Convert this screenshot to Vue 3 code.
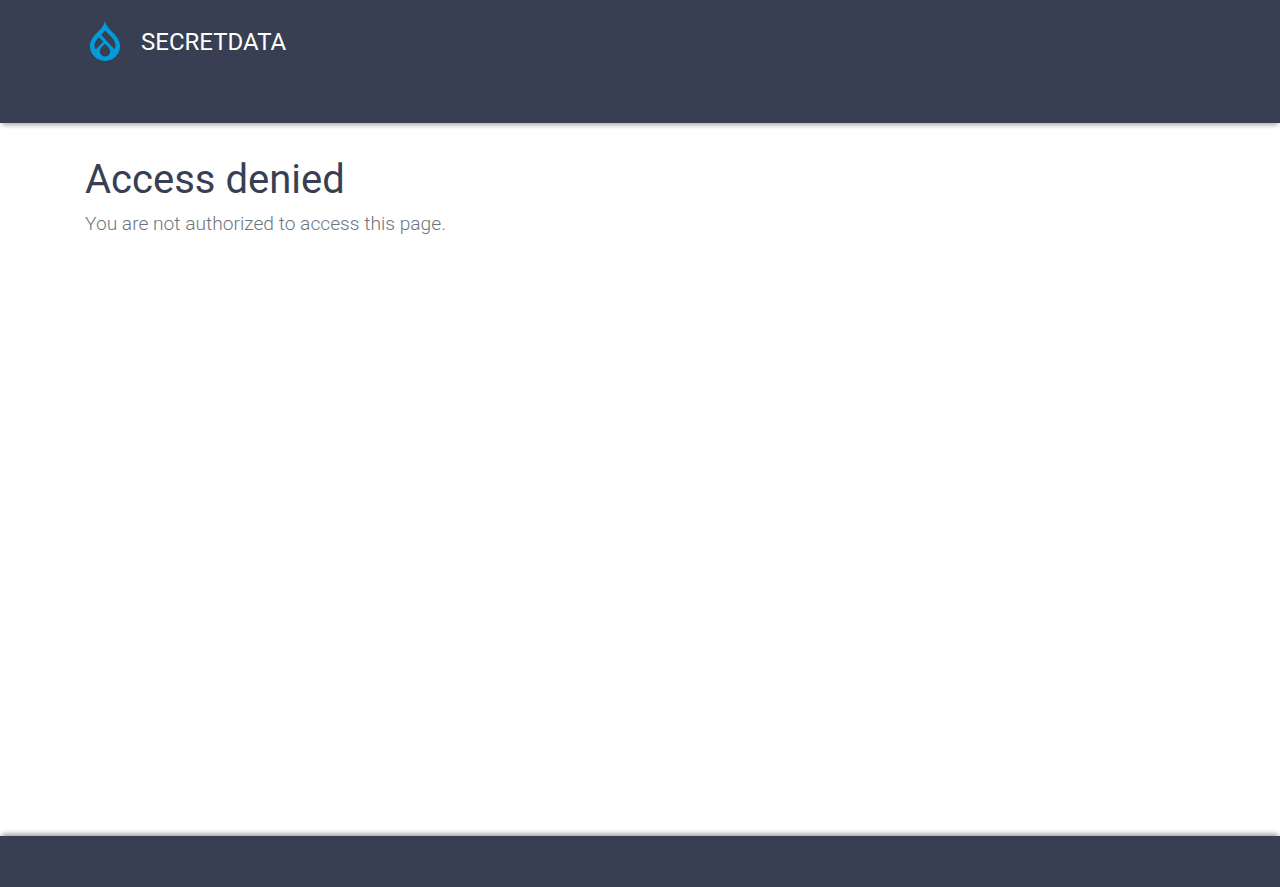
<template>
  <div class="page">
    <header class="bar header">
      <div class="container">
        <a class="brand">
          <svg class="logo" viewBox="0 0 40 40" aria-hidden="true">
            <path fill="#009cde" d="M26.200 9.900C23.600 7.300 21.100 4.800 20 .3c-1.100 4.500-3.600 7-6.200 9.600C9.900 13.800 5 18.300 5 24.900a15 15 0 0 0 30 0c0-6.600-4.900-11.100-8.800-15z" />
            <path class="hole" d="M11.500 27.700q-.8.800-1.300-.2c-1-2-1.100-4.100-.2-6 .9-1.900 2.400-3.600 4-5.200l4.400 4.500zM20 35.400a5.200 5.200 0 0 1-5.200-5.200c0-2.600 2.500-4.600 5.200-7.400 2.700 2.800 5.200 4.800 5.200 7.400a5.200 5.200 0 0 1-5.200 5.200zM28.700 27.500L16.300 14.100 20 9.600c4.700 4.600 8.500 7.900 10.100 11.800.9 2.200.7 4.400-.2 6.100q-.5.800-1.200 0z" />
          </svg>
          <span>SECRETDATA</span>
        </a>
      </div>
    </header>
    <main class="container main">
      <h1>Access denied</h1>
      <p>You are not authorized to access this page.</p>
    </main>
    <footer class="bar footer"></footer>
  </div>
</template>

<script setup>
</script>

<style>
body { margin: 0; background: #fff; }
</style>

<style scoped>
.page { display: flex; flex-direction: column; height: 887px; font-family: Roboto, sans-serif; overflow: hidden; }
.bar { background: #393f52; flex: none; }
.header { height: 123px; box-shadow: 0 4px 5px -2px rgba(0, 0, 0, 0.35); }
.footer { height: 51px; box-shadow: 0 -4px 5px -2px rgba(0, 0, 0, 0.4); }
.container { width: 1110px; margin: 0 auto; }
.brand { display: flex; align-items: flex-start; gap: 16px; padding-top: 21px; color: #fff; font-size: 24px; line-height: 40px; }
.brand span { padding-top: 1px; }
.logo { width: 40px; height: 40px; display: block; }
.hole { fill: #393f52; }
.main { flex: 1; padding-top: 33px; }
h1 { margin: 0 0 6px; font-size: 40px; font-weight: 400; line-height: 48px; color: #393f52; }
p { margin: 0; font-size: 19.2px; font-weight: 300; line-height: 28.8px; color: #6c757d; }
</style>
